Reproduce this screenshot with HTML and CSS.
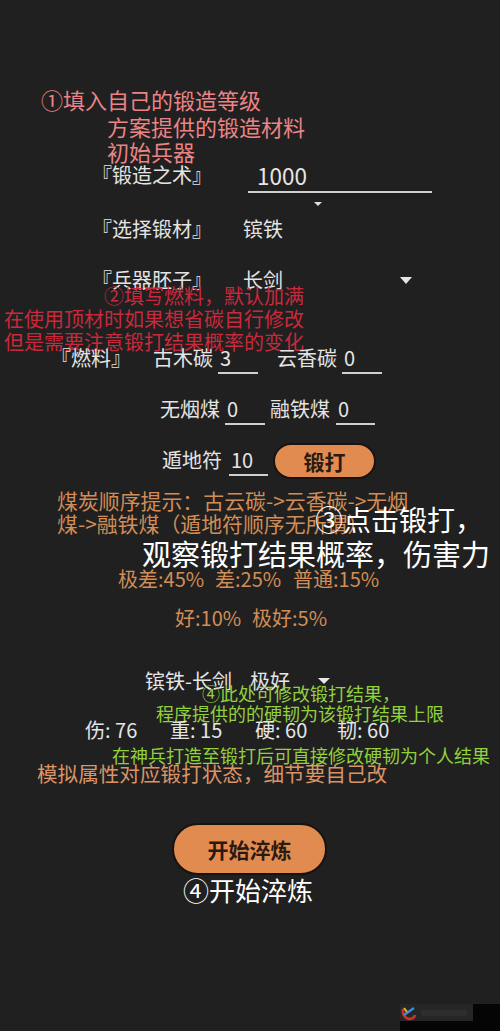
FILE: index.html
```html
<!DOCTYPE html>
<html lang="zh-CN">
<head>
<meta charset="utf-8">
<title>锻造模拟</title>
<link rel="stylesheet" href="styles.css">
</head>
<body>
<div class="page">
  <p class="t1">①填入自己的锻造等级</p>
  <p class="t2">方案提供的锻造材料</p>
  <p class="t3">初始兵器</p>

  <div class="art">
    <span class="lbl-art">『锻造之术』</span>
    <span class="in-art">1000</span>
  </div>
  <div class="caret-row"><span class="caret-s"></span></div>

  <div class="sel">
    <span class="lbl-sel">『选择锻材』</span>
    <span class="val">镔铁</span>
  </div>
  <div class="blank">
    <span class="lbl-sel">『兵器胚子』</span>
    <span class="val val-wide">长剑</span>
    <span class="caret-m"></span>
  </div>

  <p class="red1">②填写燃料，默认加满</p>
  <p class="red2">在使用顶材时如果想省碳自行修改</p>
  <p class="red3">但是需要注意锻打结果概率的变化</p>

  <div class="fuel fuel1">
    <span class="lbl-fuel">『燃料』</span>
    <span class="fname">古木碳</span>
    <span class="fin fin-a">3</span>
    <span class="fname fname-b">云香碳</span>
    <span class="fin fin-a">0</span>
  </div>
  <div class="fuel fuel2">
    <span class="fname">无烟煤</span>
    <span class="fin fin-a">0</span>
    <span class="fname fname-c">融铁煤</span>
    <span class="fin fin-d">0</span>
  </div>
  <div class="fuel fuel3">
    <div class="fgroup">
      <span class="fname">遁地符</span>
      <span class="fin fin-e">10</span>
    </div>
    <span class="btn-forge">锻打</span>
  </div>

  <p class="o1">煤炭顺序提示：古云碳-&gt;云香碳-&gt;无烟</p>
  <p class="o2">煤-&gt;融铁煤（遁地符顺序无所谓）</p>
  <p class="s1">③点击锻打，</p>
  <p class="s2">观察锻打结果概率，伤害力</p>

  <div class="prob prob1">
    <span class="p-a">极差:45%</span>
    <span class="p-b">差:25%</span>
    <span>普通:15%</span>
  </div>
  <div class="prob prob2">
    <span class="p-c">好:10%</span>
    <span>极好:5%</span>
  </div>

  <div class="res">
    <span class="res-a">镔铁-长剑</span>
    <span class="res-b">极好</span>
    <span class="caret-l"></span>
  </div>
  <p class="g1">④此处可修改锻打结果，</p>
  <p class="g2">程序提供的的硬韧为该锻打结果上限</p>
  <div class="stats">
    <span class="st">伤: 76</span>
    <span class="st">重: 15</span>
    <span class="st st-c">硬: 60</span>
    <span>韧: 60</span>
  </div>
  <p class="g3">在神兵打造至锻打后可直接修改硬韧为个人结果</p>
  <p class="o3">模拟属性对应锻打状态，细节要自己改</p>

  <div class="btnrow"><span class="btn-temper">开始淬炼</span></div>
  <p class="s3">④开始淬炼</p>

  <div class="wm">
    <div class="wm-box">
      <svg class="wm-logo" width="16" height="16" viewBox="0 0 16 16">
        <path d="M2 4 Q1 12 8 14 Q13 14 14 10" fill="none" stroke="#d0302a" stroke-width="2.6"/>
        <path d="M3 10 L13 3" stroke="#2f8fe0" stroke-width="2.4"/>
        <path d="M3 3 L6 7" stroke="#f0b020" stroke-width="2"/>
      </svg>
      <span class="wm-bar"></span>
    </div>
  </div>
  <div class="wm-black1"></div>
  <div class="wm-black2"></div>
</div>
</body>
</html>
```

FILE: styles.css
```css
html, body {
  margin: 0;
  padding: 0;
  background: #202020;
}

.page {
  position: relative;
  width: 500px;
  height: 1031px;
  overflow: hidden;
  background: #202020;
  font-family: "Noto Sans CJK SC", "Noto Sans", sans-serif;
  color: #e4e4e4;
}

p {
  margin: 0;
  white-space: nowrap;
}

.t1, .t2, .t3 {
  font-size: 22px;
  color: #ea8486;
}
.t1 { margin-top: 86px; height: 26px; line-height: 26px; padding-left: 41px; }
.t2 { margin-top: 1px; height: 26px; line-height: 26px; padding-left: 107px; }
.t3 { height: 24px; line-height: 24px; padding-left: 107px; }

.art {
  display: flex;
  align-items: flex-start;
  margin-top: -2px;
  padding-left: 92px;
  height: 32px;
  font-size: 20px;
}
.lbl-art {
  width: 156px;
  line-height: 28px;
}
.in-art {
  width: 175px;
  padding-left: 9px;
  height: 28px;
  line-height: 28px;
  padding-bottom: 2px;
  border-bottom: 2px solid #cfcfcf;
  font-size: 22.5px;
  color: #e6e6e6;
}

.caret-row {
  margin-top: 9px;
  height: 4px;
  padding-left: 314px;
  display: flex;
}
.caret-s {
  width: 0;
  height: 0;
  border-left: 4px solid transparent;
  border-right: 4px solid transparent;
  border-top: 4px solid #e0e0e0;
}

.sel, .blank {
  display: flex;
  align-items: center;
  height: 28px;
  line-height: 28px;
  padding-left: 92px;
  font-size: 20px;
}
.sel { margin-top: 9px; }
.blank { margin-top: 23px; }
.lbl-sel { width: 151px; }
.val-wide { width: 157px; }
.caret-m {
  width: 0;
  height: 0;
  border-left: 6px solid transparent;
  border-right: 6px solid transparent;
  border-top: 7px solid #e6e6e6;
}

.red1, .red2, .red3 {
  font-size: 20px;
  color: #c9293c;
}
.red1 { margin-top: -9px; height: 22px; line-height: 22px; padding-left: 104px; }
.red2 { height: 24px; line-height: 24px; padding-left: 4px; }
.red3 { height: 22px; line-height: 22px; padding-left: 4px; }

.fuel {
  display: flex;
  align-items: flex-start;
  font-size: 20px;
  line-height: 24px;
}
.fuel1 { margin-top: -7px; padding-left: 51px; height: 28px; }
.fuel2 { margin-top: 23px; padding-left: 160px; height: 28px; }
.fuel3 { margin-top: 18px; padding-left: 162px; height: 36px; }

.lbl-fuel { width: 102px; }
.fname { line-height: 24px; }
.fname-b { margin-left: 19px; }
.fname-c { margin-left: 5px; }

.fin {
  box-sizing: border-box;
  height: 28px;
  line-height: 24px;
  padding-left: 2px;
  border-bottom: 2px solid #cfcfcf;
  color: #e6e6e6;
}
.fin-a { width: 40px; margin-left: 5px; }
.fin-d { width: 39px; margin-left: 6px; }
.fin-e { width: 39px; margin-left: 7px; }

.fgroup {
  display: flex;
  margin-top: 5px;
}
.btn-forge {
  box-sizing: border-box;
  width: 103px;
  height: 36px;
  margin-left: 5px;
  border-radius: 18px;
  background: #e28b50;
  border: 2px solid #1a1411;
  color: #2a1a10;
  font-weight: 700;
  font-size: 21px;
  line-height: 32px;
  text-align: center;
}

.o1, .o2 {
  font-size: 20.9px;
  color: #d28d56;
  padding-left: 57px;
  height: 22px;
  line-height: 22px;
}
.o1 { margin-top: 10px; }
.o2 { margin-top: 1px; }

.s1, .s2, .s3 {
  color: #ffffff;
}
.s1 { margin-top: -31px; height: 32px; line-height: 32px; padding-left: 315px; font-size: 28px; }
.s2 { margin-top: 1px; height: 34px; line-height: 34px; padding-left: 142px; font-size: 29px; }

.prob {
  display: flex;
  font-size: 20px;
  color: #d28d56;
  height: 24px;
  line-height: 24px;
}
.prob1 { margin-top: -3px; padding-left: 118px; }
.prob2 { margin-top: 15px; padding-left: 175px; }
.p-a { width: 97px; }
.p-b { width: 78px; }
.p-c { width: 77px; }

.res {
  display: flex;
  align-items: center;
  margin-top: 38px;
  height: 26px;
  line-height: 26px;
  padding-left: 145px;
  font-size: 20px;
  color: #e6e6e6;
}
.res-a { width: 105px; }
.res-b { width: 68px; }
.caret-l {
  width: 0;
  height: 0;
  border-left: 6px solid transparent;
  border-right: 6px solid transparent;
  border-top: 6px solid #e6e6e6;
}

.g1, .g2, .g3 {
  font-size: 18px;
  color: #92d13c;
  height: 20px;
  line-height: 20px;
}
.g1 { margin-top: -11px; padding-left: 202px; }
.g2 { padding-left: 156px; }
.g3 { margin-top: 3px; padding-left: 112px; }

.stats {
  display: flex;
  margin-top: -5px;
  height: 24px;
  line-height: 24px;
  padding-left: 85px;
  font-size: 20px;
  color: #e6e6e6;
}
.st { width: 85px; }
.st-c { width: 82px; }

.o3 {
  margin-top: -4px;
  height: 24px;
  line-height: 24px;
  padding-left: 37px;
  font-size: 20.6px;
  color: #dc9466;
}

.btnrow {
  margin-top: 38px;
  padding-left: 172px;
  display: flex;
}
.btn-temper {
  box-sizing: border-box;
  width: 155px;
  height: 52px;
  border-radius: 26px;
  background: #e28b50;
  border: 2px solid #171311;
  color: #2a1a10;
  font-weight: 700;
  font-size: 21px;
  line-height: 48px;
  text-align: center;
}

.s3 { margin-top: -1px; height: 32px; line-height: 32px; padding-left: 183px; font-size: 26px; }

.wm {
  position: absolute;
  left: 400px;
  top: 1004px;
  width: 73px;
  height: 17px;
  background: #262626;
}
.wm-box {
  display: flex;
  align-items: center;
  height: 17px;
  padding-left: 1px;
  gap: 4px;
}
.wm-bar {
  width: 46px;
  height: 6px;
  background: #2e2e2e;
}
.wm-black1 {
  position: absolute;
  left: 473px;
  top: 1004px;
  width: 27px;
  height: 27px;
  background: #050505;
}
.wm-black2 {
  position: absolute;
  left: 400px;
  top: 1021px;
  width: 100px;
  height: 10px;
  background: #050505;
}
```
